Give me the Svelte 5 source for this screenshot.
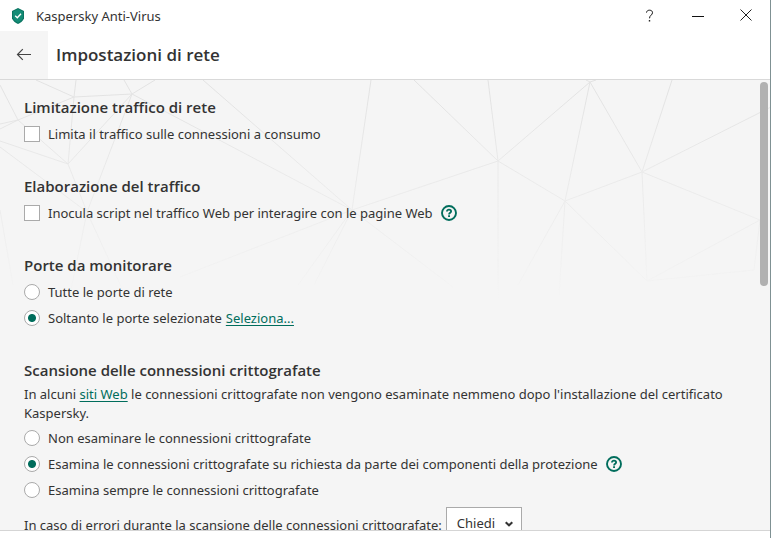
<script>
  let limitTraffic = $state(false);
  let injectScript = $state(false);
  let ports = $state('selected');
  let scan = $state('onRequest');
  let onError = $state('Chiedi');

  const meshLines = [
    [0, 5, 18, 40], [18, 40, 74, 17], [74, 17, 36, 0], [74, 17, 76, 0], [74, 17, 132, 14],
    [74, 17, 68, 84], [132, 14, 68, 84], [132, 14, 124, 0], [132, 14, 155, 0], [132, 14, 352, 130],
    [132, 14, 87, 132], [203, 0, 352, 130], [352, 130, 371, 0], [352, 130, 498, 81], [352, 130, 453, 207],
    [18, 40, 68, 84], [0, 44, 18, 40], [0, 49, 18, 40], [0, 61, 68, 84], [0, 67, 87, 132],
    [68, 84, 87, 132], [87, 132, 70, 215], [87, 132, 125, 215], [0, 130, 13, 205], [352, 130, 180, 197],
    [352, 130, 298, 205], [352, 130, 314, 205], [498, 81, 414, 0], [498, 81, 488, 0], [498, 81, 590, 2],
    [498, 81, 565, 121], [498, 81, 498, 225], [590, 2, 565, 121], [590, 2, 642, 92], [565, 121, 642, 92],
    [565, 121, 518, 205], [565, 121, 559, 215], [565, 121, 647, 201], [642, 92, 672, 0], [642, 92, 771, 27],
    [642, 92, 760, 140], [642, 92, 647, 201], [760, 140, 647, 201], [760, 140, 754, 190], [647, 201, 754, 190],
    [590, 2, 586, 0], [590, 2, 596, 0]
  ];
</script>

{#snippet help()}
  <button class="help" aria-label="Guida">
    <svg width="16" height="16" viewBox="0 0 16 16" fill="none" stroke="currentColor">
      <circle cx="8" cy="8" r="7" stroke-width="1.9" />
      <path d="M5.9 6.6C5.900 5.300 6.800 4.700 8 4.700s2.100.7 2.100 1.800c0 1.300-2 1.400-2 2.900" stroke-width="1.8" />
      <path d="M7.100 11.200h1.900" stroke-width="1.7" />
    </svg>
  </button>
{/snippet}

<div class="window">
  <header class="titlebar">
    <svg class="logo" width="14" height="16" viewBox="0 0 14 16">
      <path d="M7 0 13 3v7.3C12.4 13 9.500 14.800 7 16 4.500 14.800 1.600 13 1 10.300V3z" fill="#0b7562" />
      <path d="M7 1.200 11.900 3.600v6.500C11.300 12.300 9 13.800 7 14.800 5 13.800 2.700 12.300 2.100 10.100V3.600z" fill="#148c76" />
      <path d="M4.200 7.700 6.300 9.700 10 5.700" fill="none" stroke="#fff" stroke-width="1.400" />
    </svg>
    <span class="app-name">Kaspersky Anti-Virus</span>
    <div class="controls">
      <button aria-label="Guida in linea">
        <svg width="14" height="14" viewBox="0 0 14 14" fill="none" stroke="#111">
          <path d="M3.500 3.600C3.700 2 4.800 1.200 6.500 1.200c1.900 0 3 1 3 2.500 0 2.300-3 2.600-3 5.600" />
          <path d="M5.800 11.800h1.400" stroke-width="1.400" />
        </svg>
      </button>
      <button aria-label="Riduci a icona">
        <svg width="14" height="14" viewBox="0 0 14 14" stroke="#111"><path d="M1 7.500h12" /></svg>
      </button>
      <button aria-label="Chiudi">
        <svg width="14" height="14" viewBox="0 0 14 14" stroke="#222"><path d="M1.500 .5 12.500 11.500M12.500 .5 1.500 11.500" /></svg>
      </button>
    </div>
  </header>

  <div class="page-head">
    <button class="back" aria-label="Indietro">
      <svg width="16" height="14" viewBox="0 0 16 14" fill="none" stroke="#444" stroke-width="1.200">
        <path d="M15 6.500H1.500M6.800 1.200 1.500 6.500l5.300 5.300" />
      </svg>
    </button>
    <h1>Impostazioni di rete</h1>
  </div>

  <main class="panel">
    <svg class="mesh" width="771" height="230" viewBox="0 0 771 230" aria-hidden="true">
      {#each meshLines as [x1, y1, x2, y2]}
        <line {x1} {y1} {x2} {y2} />
      {/each}
    </svg>

    <div class="content">
      <section>
        <h2>Limitazione traffico di rete</h2>
        <div class="row">
          <label><input type="checkbox" bind:checked={limitTraffic} />Limita il traffico sulle connessioni a consumo</label>
        </div>
      </section>

      <section>
        <h2>Elaborazione del traffico</h2>
        <div class="row">
          <label><input type="checkbox" bind:checked={injectScript} />Inocula script nel traffico Web per interagire con le pagine Web</label>
          {@render help()}
        </div>
      </section>

      <section>
        <h2>Porte da monitorare</h2>
        <div class="row">
          <label><input type="radio" name="ports" value="all" bind:group={ports} />Tutte le porte di rete</label>
        </div>
        <div class="row">
          <label><input type="radio" name="ports" value="selected" bind:group={ports} />Soltanto le porte selezionate</label>
          <a class="after" href="#porte">Seleziona...</a>
        </div>
      </section>

      <section>
        <h2>Scansione delle connessioni crittografate</h2>
        <p>In alcuni <a href="#siti">siti Web</a> le connessioni crittografate non vengono esaminate nemmeno dopo l'installazione del certificato Kaspersky.</p>
        <div class="row">
          <label><input type="radio" name="scan" value="never" bind:group={scan} />Non esaminare le connessioni crittografate</label>
        </div>
        <div class="row">
          <label><input type="radio" name="scan" value="onRequest" bind:group={scan} />Esamina le connessioni crittografate su richiesta da parte dei componenti della protezione</label>
          {@render help()}
        </div>
        <div class="row">
          <label><input type="radio" name="scan" value="always" bind:group={scan} />Esamina sempre le connessioni crittografate</label>
        </div>
        <div class="row errors">
          <label for="on-error">In caso di errori durante la scansione delle connessioni crittografate:</label>
          <span class="select">
            <select id="on-error" bind:value={onError}>
              <option>Chiedi</option>
            </select>
            <svg width="8" height="6" viewBox="0 0 8 6" fill="none" stroke="#333" stroke-width="2"><path d="M.7 1.200 4 4.300 7.300 1.200" /></svg>
          </span>
        </div>
      </section>
    </div>

    <div class="scrollbar"></div>
  </main>
</div>

<style>
  .window {
    box-sizing: border-box;
    height: 100vh;
    display: flex;
    flex-direction: column;
    padding-bottom: 7px;
    border-right: 1px solid #7f9193;
    background: #fff;
    color: #333;
    font-family: "Noto Sans", "Open Sans", sans-serif;
    font-size: 13px;
  }
  button {
    display: flex;
    align-items: center;
    justify-content: center;
    padding: 0;
    border: 0;
    background: none;
  }
  .titlebar {
    flex: none;
    display: flex;
    align-items: center;
    height: 31px;
    padding-left: 11px;
  }
  .app-name { margin-left: 11px; }
  .controls {
    display: flex;
    align-self: stretch;
    margin-left: auto;
  }
  .controls button { width: 48px; }
  .page-head {
    flex: none;
    display: flex;
    align-items: center;
    height: 48px;
    border-bottom: 1px solid #d9d9d9;
  }
  .back {
    width: 48px;
    height: 48px;
    background: #f5f5f5;
  }
  h1, h2, p { margin: 0; }
  h1, h2 {
    font-family: "Open Sans", "Noto Sans", sans-serif;
    font-weight: 600;
  }
  h1 {
    margin-left: 8px;
    padding-bottom: 2px;
    font-size: 17px;
  }
  .panel {
    position: relative;
    flex: 1;
    min-height: 0;
    overflow: hidden;
    background: #f5f5f5;
    border-bottom: 1px solid #d5d5d5;
  }
  .mesh {
    position: absolute;
    top: 0;
    left: 0;
    stroke: #e2e2e2;
    stroke-width: 1;
    mask-image: linear-gradient(#000, transparent 95%);
  }
  .content {
    position: relative;
    display: flex;
    flex-direction: column;
    gap: 28px;
    padding: 16px 24px;
  }
  h2 {
    margin-bottom: 3px;
    font-size: 15px;
    line-height: 22px;
  }
  p {
    padding: 1px 0 2px;
    line-height: 19px;
  }
  .row {
    display: flex;
    align-items: center;
    height: 26px;
  }
  .row label {
    display: flex;
    align-items: center;
  }
  input {
    appearance: none;
    box-sizing: border-box;
    flex: none;
    width: 16px;
    height: 16px;
    margin: 0 8px 0 0;
    border: 1px solid #aaa;
    background: #fff;
  }
  input[type="radio"] { border-radius: 50%; }
  input[type="radio"]:checked { background: radial-gradient(circle, #006d5c 3.5px, #fff 4.5px); }
  input[type="checkbox"]:checked { background: #006d5c; }
  a {
    color: #006d5c;
    text-decoration: underline;
    text-underline-offset: 2px;
  }
  .after { margin-left: 4px; }
  .help {
    margin-left: 8px;
    color: #006d5c;
  }
  .errors {
    height: 32px;
    margin-top: 4px;
  }
  .errors label { padding-top: 3px; }
  .select {
    position: relative;
    margin-left: 4px;
  }
  select {
    appearance: none;
    box-sizing: border-box;
    display: block;
    height: 32px;
    padding: 0 25px 0 10px;
    border: 1px solid #aaa;
    border-radius: 0;
    background: #fff;
    color: inherit;
    font: inherit;
  }
  .select svg {
    position: absolute;
    top: 14px;
    right: 9px;
    pointer-events: none;
  }
  .scrollbar {
    position: absolute;
    top: 2px;
    right: 2px;
    width: 8px;
    height: 204px;
    border-radius: 4px;
    background: #b1b1b1;
  }
</style>
